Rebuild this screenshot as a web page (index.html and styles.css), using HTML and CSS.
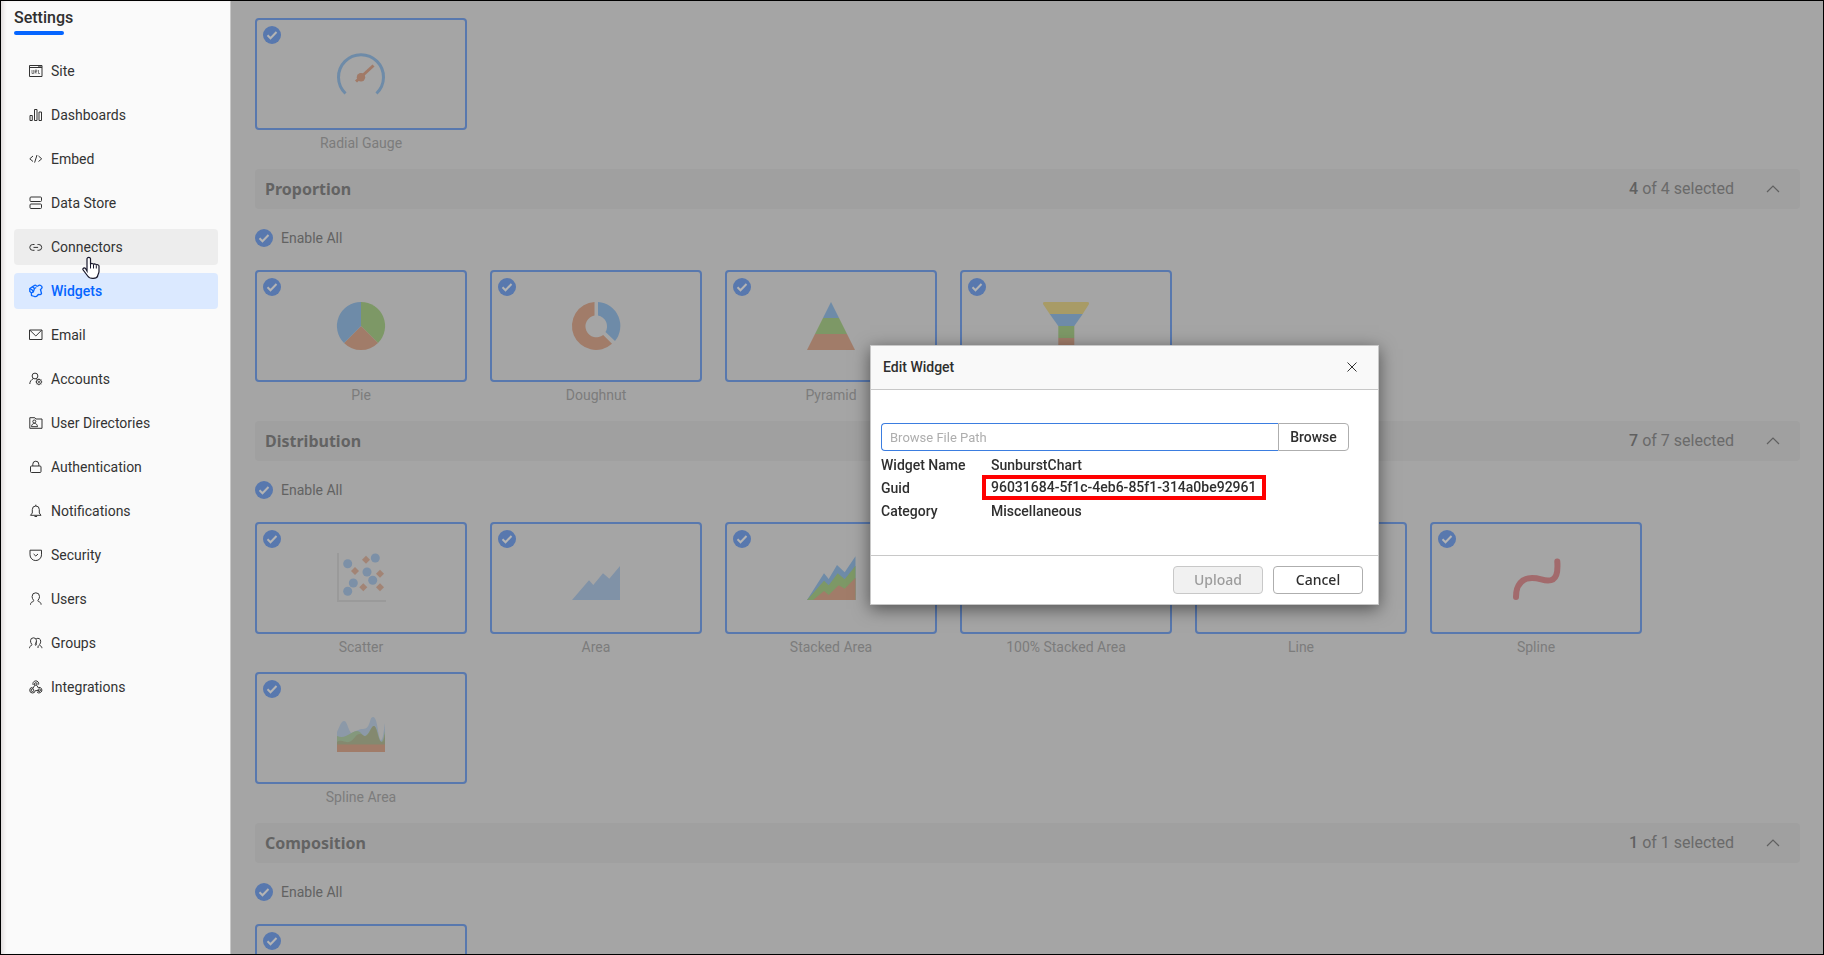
FILE: index.html
```html
<!DOCTYPE html>
<html lang="en">
<head>
<meta charset="utf-8">
<title>Settings - Widgets</title>
<link rel="stylesheet" href="styles.css">
</head>
<body>
<div class="app">
  <aside class="sidebar">
    <h1 class="sidebar-title">Settings</h1>
    <nav class="nav">
      <a class="nav-item" href="#site"><svg class="nav-icon" viewBox="0 0 14 14"><path d="M.5 1.500h12.500v11H.5zM.5 3.500h12.500"/><path d="M9 2.500h3.500M3 6v3.500h1.700V6M6.200 9.500V6h1.600v1.600H6.200l1.600 1.900M9.500 6v3.500h1.500" stroke-width=".6"/></svg>Site</a>
      <a class="nav-item" href="#dashboards"><svg class="nav-icon" viewBox="0 0 14 14"><path d="M1 7.500h2.300v5H1zM5.500 1.500h2.500v11H5.500zM10 4h2.500v8.500h-2.500z"/></svg>Dashboards</a>
      <a class="nav-item" href="#embed"><svg class="nav-icon" viewBox="0 0 14 14"><path d="M4 4L.8 6.800 4 9.500M9.500 4l3.200 2.800L9.500 9.500M8 3L5.600 10.600"/></svg>Embed</a>
      <a class="nav-item" href="#data-store"><svg class="nav-icon" viewBox="0 0 14 14"><rect x="1" y="1" width="11.500" height="4.500" rx="1"/><rect x="1" y="8" width="11.500" height="4.500" rx="1"/></svg>Data Store</a>
      <a class="nav-item nav-item-hover" href="#connectors"><svg class="nav-icon" viewBox="0 0 14 14"><path d="M5.500 4.500H3.700a2.900 2.900 0 0 0 0 5.800h1.800M8.500 4.500h1.300a2.900 2.900 0 0 1 0 5.800H8.500M4.500 7.400h4.600"/></svg>Connectors</a>
      <a class="nav-item nav-item-active" href="#widgets" aria-current="page"><svg class="nav-icon" viewBox="0 0 14 14"><path d="M3.300 2.700L5.200 1.600Q6.300.7 7.300 1.700Q8.200 2.500 9.200 1.700Q10.500.6 11.700 1.500Q13.300 2.300 13 3.800Q12.500 5 11.500 5.500L12.500 9.500Q11.800 11 10.200 10.500Q9 10.300 8.500 11.500Q7.300 13 5.500 12.500L2.500 11.500L2.300 8.800L.8 7.500V4.500z"/><path d="M3.300 2.700L5.500 4.500L4.300 8L2.300 8.800M.8 4.500L3.200 6L4.300 8M5.500 4.500L7.300 3.500"/></svg>Widgets</a>
      <a class="nav-item" href="#email"><svg class="nav-icon" viewBox="0 0 14 14"><path d="M.5 2h12.500v9.500H.5zM1 2.300l5.800 5.700L12.500 2.300"/></svg>Email</a>
      <a class="nav-item" href="#accounts"><svg class="nav-icon" viewBox="0 0 14 14"><circle cx="6" cy="4" r="2.900"/><path d="M.8 12c0-2.500 1.400-4.300 3.500-5.300M7.500 6.800l1 .8"/><circle cx="9.900" cy="9.900" r="2.500"/><circle cx="9.900" cy="9.900" r=".7"/><path d="M9.900 6.600v.8M9.900 12.400v.8M6.600 9.900h.8M12.400 9.900h.8M7.600 7.600l.5.5M12.200 7.600l-.5.500M7.600 12.200l.5-.5M12.200 12.200l-.5-.5"/></svg>Accounts</a>
      <a class="nav-item" href="#user-directories"><svg class="nav-icon" viewBox="0 0 14 14"><path d="M.8 1.700h5l1 1.300h6.200v9.300H.8z"/><circle cx="5.300" cy="5.500" r="1.500"/><path d="M2.500 10.700h6c0-2-1.400-3.300-3-3.300s-3 1.300-3 3.300z"/></svg>User Directories</a>
      <a class="nav-item" href="#authentication"><svg class="nav-icon" viewBox="0 0 14 14"><rect x="1.500" y="6" width="10.500" height="6.500" rx="1"/><path d="M3.800 6V4.200a3 3 0 0 1 6 0V6"/></svg>Authentication</a>
      <a class="nav-item" href="#notifications"><svg class="nav-icon" viewBox="0 0 14 14"><path d="M1.500 11.300h10.500L10.300 9V5.500A3.500 3.500 0 0 0 6.800 2a3.500 3.500 0 0 0-3.500 3.500V9zM6.800 2V.7M5.500 12.500h2.600"/></svg>Notifications</a>
      <a class="nav-item" href="#security"><svg class="nav-icon" viewBox="0 0 14 14"><path d="M1 2.200h11.500v4.600a5.700 5.700 0 0 1-11.500 0z"/><path d="M4.600 6l2.200 2 2.200-2"/></svg>Security</a>
      <a class="nav-item" href="#users"><svg class="nav-icon" viewBox="0 0 14 14"><path d="M1.500 12.700c0-1.700.7-2.500 2.300-3 .9-.3 1.200-.9.600-1.700C3.500 7 3.100 5.700 3.100 4.500a3.700 3.700 0 0 1 7.400 0c0 1.200-.4 2.500-1.300 3.500-.6.800-.3 1.400.6 1.700 1.600.5 2.300 1.300 2.300 3"/></svg>Users</a>
      <a class="nav-item" href="#groups"><svg class="nav-icon" viewBox="0 0 14 14"><path d="M.5 12.200c0-1.500.5-2.100 1.800-2.600.7-.3.8-.8.300-1.500C1.900 7.300 1.500 6 1.500 4.800a3 3 0 0 1 6 0c0 1.200-.4 2.500-1 3.300-.5.700-.4 1.200.3 1.500"/><path d="M7.300 2.700c2-1 4.400 0 4.400 2.500 0 1.200-.3 2.300-.9 3-.5.700-.4 1.200.3 1.500 1.300.5 1.800 1.100 1.800 2.500M7.800 9.200c-.8-1-.8-2.500-.6-3.500M9 12c0-1.500 0-2 1-2.500"/></svg>Groups</a>
      <a class="nav-item" href="#integrations"><svg class="nav-icon" viewBox="0 0 14 14"><circle cx="6.800" cy="4" r="1.300"/><circle cx="3.500" cy="10.200" r="1.300"/><circle cx="10.200" cy="10.200" r="1.300"/><path d="M4.200 5A2.900 2.900 0 1 1 9.600 4.600M5.800 5.200L3.500 9M3.500 7.400a2.800 2.800 0 1 0 2.800 3.200h4M7.600 5.200L9.500 8M8 12a2.800 2.800 0 1 0 1.500-4.600"/></svg>Integrations</a>
    </nav>
  </aside>

  <main class="content">
    <section class="group">
      <div class="cards">
        <div class="widget"><div class="card"><input class="check card-check" type="checkbox" id="w-radial" checked><svg class="chart" viewBox="0 0 48 48"><path d="M8.500 43.500A22.500 22.500 0 1 1 39.500 43.500" fill="none" stroke="#6e8ba8" stroke-width="3"/><path d="M19 31.500L36.500 15.500" stroke="#a17a67" stroke-width="3"/><circle cx="24" cy="27.300" r="4.200" fill="#a17a67"/></svg></div><label class="widget-name" for="w-radial">Radial Gauge</label></div>
      </div>
    </section>

    <section class="group">
      <header class="group-head"><h2 class="group-title">Proportion</h2><span class="count"><b>4</b> of 4 selected</span><button class="toggle" type="button" aria-label="Collapse Proportion"><svg viewBox="0 0 14 8"><path d="M1 7l6-6 6 6"/></svg></button></header>
      <div class="enable"><input class="check" type="checkbox" id="all-proportion" checked><label for="all-proportion">Enable All</label></div>
      <div class="cards">
        <div class="widget"><div class="card"><input class="check card-check" type="checkbox" id="w-pie" checked><svg class="chart" viewBox="0 0 48 48"><path d="M24 24V0A24 24 0 0 1 41 41z" fill="#7d9866"/><path d="M24 24L41 41A24 24 0 0 1 7 41z" fill="#a17c69"/><path d="M24 24L7 41A24 24 0 0 1 24 0z" fill="#6e8ba8"/></svg></div><label class="widget-name" for="w-pie">Pie</label></div>
        <div class="widget"><div class="card"><input class="check card-check" type="checkbox" id="w-doughnut" checked><svg class="chart" viewBox="0 0 48 48"><path d="M22.500 0A24 24 0 1 0 40 41.800L31.200 33A11 11 0 1 1 22.500 13.500z" fill="#a17c69"/><path d="M26 0A24 24 0 0 1 43 39L33.500 30A11 11 0 0 0 26 13.500z" fill="#6e8ba8"/></svg></div><label class="widget-name" for="w-doughnut">Doughnut</label></div>
        <div class="widget"><div class="card"><input class="check card-check" type="checkbox" id="w-pyramid" checked><svg class="chart" viewBox="0 0 48 48"><path d="M24 0L32 16H16z" fill="#6e8ba8"/><path d="M16 16h16l8 16H8z" fill="#7d9866"/><path d="M8 32h32l8 16H0z" fill="#a17c69"/></svg></div><label class="widget-name" for="w-pyramid">Pyramid</label></div>
        <div class="widget"><div class="card"><input class="check card-check" type="checkbox" id="w-funnel" checked><svg class="chart" viewBox="0 0 48 48"><path d="M2.500 0h43q2 0 1.500 2L40.700 12H7.700L1 2Q.5 0 2.500 0z" fill="#a89b66"/><path d="M7.700 12h33L32.300 24h-16z" fill="#6e8ba8"/><path d="M16.300 24h16v12h-16z" fill="#7d9866"/><path d="M16.300 36h16v12h-16z" fill="#a17c69"/></svg></div><label class="widget-name" for="w-funnel">Funnel</label></div>
      </div>
    </section>

    <section class="group">
      <header class="group-head"><h2 class="group-title">Distribution</h2><span class="count"><b>7</b> of 7 selected</span><button class="toggle" type="button" aria-label="Collapse Distribution"><svg viewBox="0 0 14 8"><path d="M1 7l6-6 6 6"/></svg></button></header>
      <div class="enable"><input class="check" type="checkbox" id="all-distribution" checked><label for="all-distribution">Enable All</label></div>
      <div class="cards">
        <div class="widget"><div class="card"><input class="check card-check" type="checkbox" id="w-scatter" checked><svg class="chart" viewBox="0 0 48 48"><path d="M1 -1V47H49" fill="none" stroke="#9a9a9a" stroke-width="2"/><g fill="#7c90a7"><circle cx="10.700" cy="9.700" r="4.500"/><circle cx="38.300" cy="4" r="4.500"/><circle cx="30" cy="18" r="4.500"/><circle cx="35.700" cy="26.300" r="4.500"/><circle cx="16.300" cy="29" r="4.500"/><circle cx="10.700" cy="37.300" r="4.500"/></g><path d="M29 1.700l4 4-4 4-4-4zM18 13l4 4-4 4-4-4zM43 15.700l4 4-4 4-4-4zM26.300 29.300l4 4-4 4-4-4zM43 29.300l4 4-4 4-4-4z" fill="#a28475"/></svg></div><label class="widget-name" for="w-scatter">Scatter</label></div>
        <div class="widget"><div class="card"><input class="check card-check" type="checkbox" id="w-area" checked><svg class="chart" viewBox="0 0 48 48"><path d="M0 46L17 26.300 21.300 31 31 19.300 37.300 24.700 48 12V46z" fill="#8092a7"/></svg></div><label class="widget-name" for="w-area">Area</label></div>
        <div class="widget"><div class="card"><input class="check card-check" type="checkbox" id="w-stacked" checked><svg class="chart" viewBox="0 0 48 48"><path d="M0 46L17 19.300 21.700 25 30 11 37.700 18.300 48.500 2.300V46z" fill="#6e8ba8"/><path d="M0 46L17 26.700 21.700 31.300 30.700 19.300 37.700 25.300 48.500 11.700V46z" fill="#7d9866"/><path d="M6 46L17 37 21.700 41 31.700 31.300 37.700 34.700 48.500 23.700V46z" fill="#a17c69"/></svg></div><label class="widget-name" for="w-stacked">Stacked Area</label></div>
        <div class="widget"><div class="card"><input class="check card-check" type="checkbox" id="w-stacked100" checked><svg class="chart" viewBox="0 0 48 48"><path d="M0 2h48v44H0z" fill="#6e8ba8"/><path d="M0 30L17 18 30 22 48 10V46H0z" fill="#7d9866"/><path d="M0 40L17 32 30 36 48 26V46H0z" fill="#a17c69"/></svg></div><label class="widget-name" for="w-stacked100">100% Stacked Area</label></div>
        <div class="widget"><div class="card"><input class="check card-check" type="checkbox" id="w-line" checked><svg class="chart" viewBox="0 0 48 48"><path d="M3 42L17 24 30 32 45 8" fill="none" stroke="#6e8ba8" stroke-width="4"/></svg></div><label class="widget-name" for="w-line">Line</label></div>
        <div class="widget"><div class="card"><input class="check card-check" type="checkbox" id="w-spline" checked><svg class="chart" viewBox="0 0 48 48"><path d="M4 43C4 31 10 24 20 24C28 24 30 26.500 36 26.500C45 26.500 46 18 45.300 7.500" fill="none" stroke="#a26a6c" stroke-width="6" stroke-linecap="round"/></svg></div><label class="widget-name" for="w-spline">Spline</label></div>
        <div class="widget"><div class="card"><input class="check card-check" type="checkbox" id="w-splinearea" checked><svg class="chart" viewBox="0 0 48 48"><path d="M0 28C3 22 4 17 7 17C10 17 11 25 14 29C20 27 22 25 26 25C34 25 32 13 36 13C41 13 41 36 44 36C46 36 46.500 28 48 19V41H0z" fill="#8c99a8"/><path d="M0 32C9 36 14 27 20 27C24 27 25 32 28 32C32 31 34 22 37 22C40 22 42 37 44 38C46 38 47 32 48 27V41H0z" fill="#84987c"/><path d="M0 38C5 35 7 39 12 38C17 37 18 30 23 30C26 30 26 33 29 32C33 30 34 22 37 22C40 22 41 38 45 38C47 38 47 34 48 30V41H0z" fill="#84896f"/><path d="M0 40.500h48v7.500H0z" fill="#a17c69"/></svg></div><label class="widget-name" for="w-splinearea">Spline Area</label></div>
      </div>
    </section>

    <section class="group">
      <header class="group-head"><h2 class="group-title">Composition</h2><span class="count"><b>1</b> of 1 selected</span><button class="toggle" type="button" aria-label="Collapse Composition"><svg viewBox="0 0 14 8"><path d="M1 7l6-6 6 6"/></svg></button></header>
      <div class="enable"><input class="check" type="checkbox" id="all-composition" checked><label for="all-composition">Enable All</label></div>
      <div class="cards">
        <div class="widget"><div class="card"><input class="check card-check" type="checkbox" aria-label="Composition widget" checked></div></div>
      </div>
    </section>
  </main>
</div>

<div class="dialog" role="dialog" aria-labelledby="dialog-title">
  <header class="dialog-head">
    <h2 class="dialog-title" id="dialog-title">Edit Widget</h2>
    <button class="close" type="button" aria-label="Close"><svg viewBox="0 0 10 10"><path d="M.5 .5l9 9M9.500 .5l-9 9"/></svg></button>
  </header>
  <div class="dialog-body">
    <div class="file">
      <input class="file-path" type="text" placeholder="Browse File Path" aria-label="Browse File Path">
      <button class="button file-button" type="button">Browse</button>
    </div>
    <dl class="details">
      <dt>Widget Name</dt><dd>SunburstChart</dd>
      <dt>Guid</dt><dd><span class="marked">96031684-5f1c-4eb6-85f1-314a0be92961</span></dd>
      <dt>Category</dt><dd>Miscellaneous</dd>
    </dl>
  </div>
  <footer class="dialog-foot">
    <button class="button action" type="button" disabled>Upload</button>
    <button class="button action" type="button">Cancel</button>
  </footer>
</div>

<svg class="pointer" viewBox="0 0 18 24" aria-hidden="true"><path d="M5 15V2.700a1.800 1.800 0 0 1 3.500 0V8.500c.3-1.500 3-1.300 3 .3.400-1.300 2.800-1 2.800.5.500-1 2.700-.8 2.700.8V15.500c0 2-1.300 3-1.300 4.500-1 3-7.700 3.500-10 0L1 13.800c-.5-1.500 1.300-2.500 2.500-1.300z" fill="#fff" stroke="#16162a" stroke-width="1.200"/><path d="M8.500 8v4.500M11.500 9v3.500M14.300 9.500v3" stroke="#16162a"/></svg>
</body>
</html>
```
FILE: styles.css
```css
* { box-sizing: border-box; }

body {
  margin: 0;
  font: 14px/18px Roboto, "Liberation Sans", sans-serif;
  color: #2f2f2f;
}

h1, h2, dl, dd { margin: 0; }

button, input { font: inherit; }

.app {
  display: flex;
  height: 100vh;
  border: 1px solid #000;
  overflow: hidden;
}

/* Sidebar */
.sidebar {
  flex: 0 0 230px;
  padding: 8px 12px 0 13px;
  background: #fafafa;
  border-right: 1px solid #c8c8c8;
  box-shadow: inset 4px 0 4px -2px #ddd8d8;
}

.sidebar-title {
  padding-bottom: 18px;
  font-size: 16px;
  line-height: 18px;
  font-weight: 500;
}

.sidebar-title::after {
  content: "";
  display: block;
  width: 50px;
  height: 4px;
  margin-top: 4px;
  border-radius: 2px;
  background: #0565ff;
}

.nav {
  display: flex;
  flex-direction: column;
  gap: 8px;
}

.nav-item {
  display: flex;
  align-items: center;
  gap: 8px;
  height: 36px;
  padding: 0 0 1px 15px;
  border-radius: 4px;
  color: #333;
  text-decoration: none;
}

.nav-item-hover { background: #ededed; }

.nav-item-active {
  background: #dbe9ff;
  color: #0565ff;
  font-weight: 500;
}

.nav-icon {
  width: 14px;
  height: 14px;
  fill: none;
  stroke: currentColor;
  stroke-width: 1;
}

.nav-item-active .nav-icon { stroke-width: 1.3; }

/* Widget list */
.content {
  flex: 1;
  min-width: 0;
  padding: 17px 23px 0 24px;
  background: #a5a5a5;
  overflow: hidden;
}

.group { padding-bottom: 17px; }

.group-head {
  display: flex;
  align-items: center;
  height: 40px;
  padding: 0 20px 0 10px;
  border-radius: 4px;
  background: #a0a0a0;
  color: #6a6a6a;
}

.group-title {
  flex: 1;
  font: 700 16px/24px "Noto Sans", sans-serif;
  color: #636363;
}

.count { font-size: 16px; }

.count b { font-weight: 500; color: #606060; }

.toggle {
  width: 14px;
  margin-left: 32px;
  padding: 0;
  border: 0;
  background: none;
}

.toggle svg {
  display: block;
  width: 14px;
  height: 8px;
  fill: none;
  stroke: #606060;
  stroke-width: 1.2;
}

.enable {
  display: flex;
  gap: 8px;
  padding: 20px 0 23px;
  color: #626262;
}

.check {
  appearance: none;
  width: 18px;
  height: 18px;
  margin: 0;
  border-radius: 50%;
  background: #5878ae url("data:image/svg+xml,%3Csvg xmlns='http://www.w3.org/2000/svg' viewBox='0 0 18 18'%3E%3Cpath d='M4.500 9.300l3 3L13.500 6' fill='none' stroke='%23b4b4b4' stroke-width='2'/%3E%3C/svg%3E");
}

.cards {
  display: flex;
  flex-wrap: wrap;
  gap: 16px 23px;
}

.widget {
  display: flex;
  flex-direction: column;
  gap: 4px;
  width: 212px;
  text-align: center;
}

.card {
  position: relative;
  display: flex;
  align-items: center;
  justify-content: center;
  height: 112px;
  border: 2px solid #5878ae;
  border-radius: 4px;
}

.card-check {
  position: absolute;
  top: 6px;
  left: 6px;
}

.chart {
  width: 48px;
  height: 48px;
  overflow: visible;
}

.widget-name { color: #7c7c7c; }

/* Dialog */
.dialog {
  position: fixed;
  top: 345px;
  left: 870px;
  width: 509px;
  border: 1px solid #c8c8c8;
  background: #fff;
  box-shadow: 0 4px 16px rgba(0, 0, 0, .5);
  font-weight: 500;
}

.dialog-head {
  display: flex;
  align-items: center;
  justify-content: space-between;
  height: 44px;
  padding: 0 21px 2px 12px;
  border-bottom: 1px solid #c8c8c8;
  background: #f9f9f9;
}

.dialog-title {
  font-size: 14px;
  font-weight: 500;
}

.close {
  width: 10px;
  padding: 0;
  border: 0;
  background: none;
}

.close svg {
  display: block;
  width: 10px;
  height: 10px;
  stroke: #333;
}

.dialog-body { padding: 33px 29px 33px 10px; }

.file { display: flex; }

.file-path {
  flex: 1;
  min-width: 0;
  height: 28px;
  padding: 0 8px;
  border: 1px solid #3b7de0;
  border-right: 0;
  border-radius: 4px 0 0 4px;
  font-size: 13px;
  font-weight: 400;
}

.file-path::placeholder { color: #aeaeae; }

.button {
  height: 28px;
  padding: 0;
  border: 1px solid #aeaeae;
  border-radius: 4px;
  background: #fff;
  color: #2f2f2f;
  font-weight: 500;
}

.file-button {
  width: 71px;
  border-radius: 0 4px 4px 0;
}

.details {
  display: grid;
  grid-template-columns: 110px 1fr;
  grid-auto-rows: 23px;
  align-items: center;
  padding-top: 2px;
}

/* The frame is wider and taller than its row, so the text keeps its column */
.marked {
  display: block;
  width: 284px;
  margin: -4px 0 -4px -9px;
  padding: 0 5px;
  border: 4px solid #f00;
  line-height: 17px;
  white-space: nowrap;
}

.dialog-foot {
  display: flex;
  justify-content: flex-end;
  gap: 10px;
  padding: 10px 15px;
  border-top: 1px solid #c8c8c8;
}

.action {
  width: 90px;
  font-family: "Noto Sans", sans-serif;
}

.action:disabled {
  border-color: #c8c8c8;
  background: #f1f1f1;
  color: #9c9c9c;
}

.pointer {
  position: absolute;
  top: 256px;
  left: 82px;
  width: 18px;
  height: 24px;
}
```
